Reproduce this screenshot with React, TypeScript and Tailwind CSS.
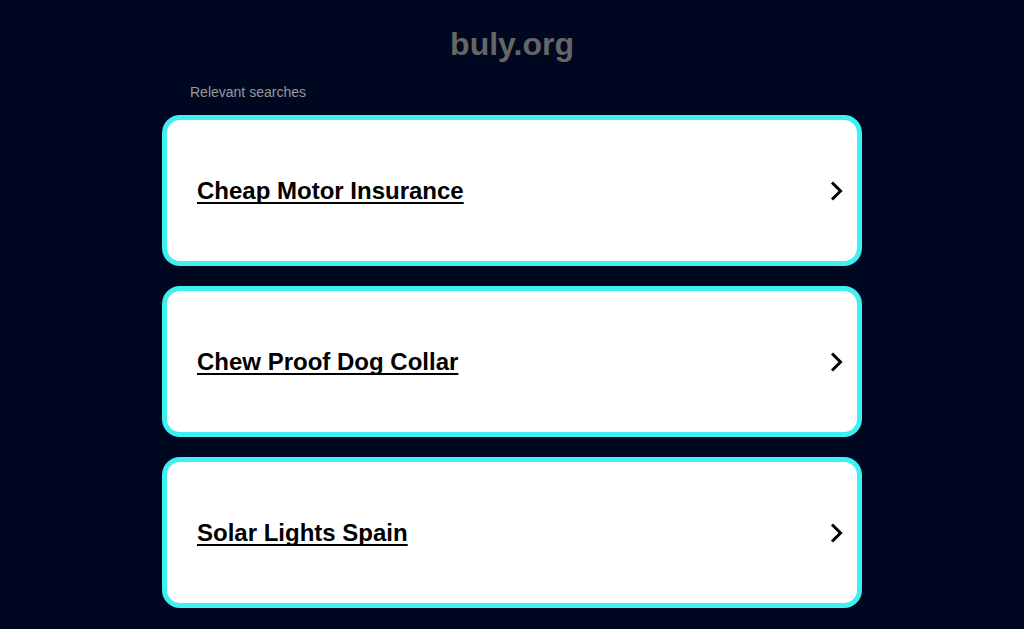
const searches = ["Cheap Motor Insurance", "Chew Proof Dog Collar", "Solar Lights Spain"];

const Chevron = () => (
  <svg width="14" height="20" viewBox="0 0 14 20" fill="none">
    <path d="M2 1.5 L10.5 10 L2 18.5" stroke="#000" strokeWidth="3" />
  </svg>
);

const App = () => {
  return (
    <div className="min-h-[629px] bg-[#000720] font-['Liberation_Sans',Arial,sans-serif]">
      <div className="mx-auto w-[700px] pt-[26px]">
        <h1 className="text-center text-[32px] font-bold leading-[36px] text-[#666666]">buly.org</h1>
        <p className="mt-[22px] pl-[28px] text-[14px] leading-[16px] text-[#999999]">Relevant searches</p>
        <div className="mt-[15px] flex flex-col gap-[20px]">
          {searches.map((s) => (
            <a
              key={s}
              href="#"
              className="flex h-[151px] items-center justify-between rounded-[18px] border-[5px] border-[#3ef0f0] bg-white pl-[30px] pr-[13px]"
            >
              <span className="text-[24px] font-bold leading-[28px] text-black underline decoration-2 underline-offset-[3px] [text-decoration-skip-ink:none]">
                {s}
              </span>
              <Chevron />
            </a>
          ))}
        </div>
      </div>
    </div>
  );
};

export default App;
